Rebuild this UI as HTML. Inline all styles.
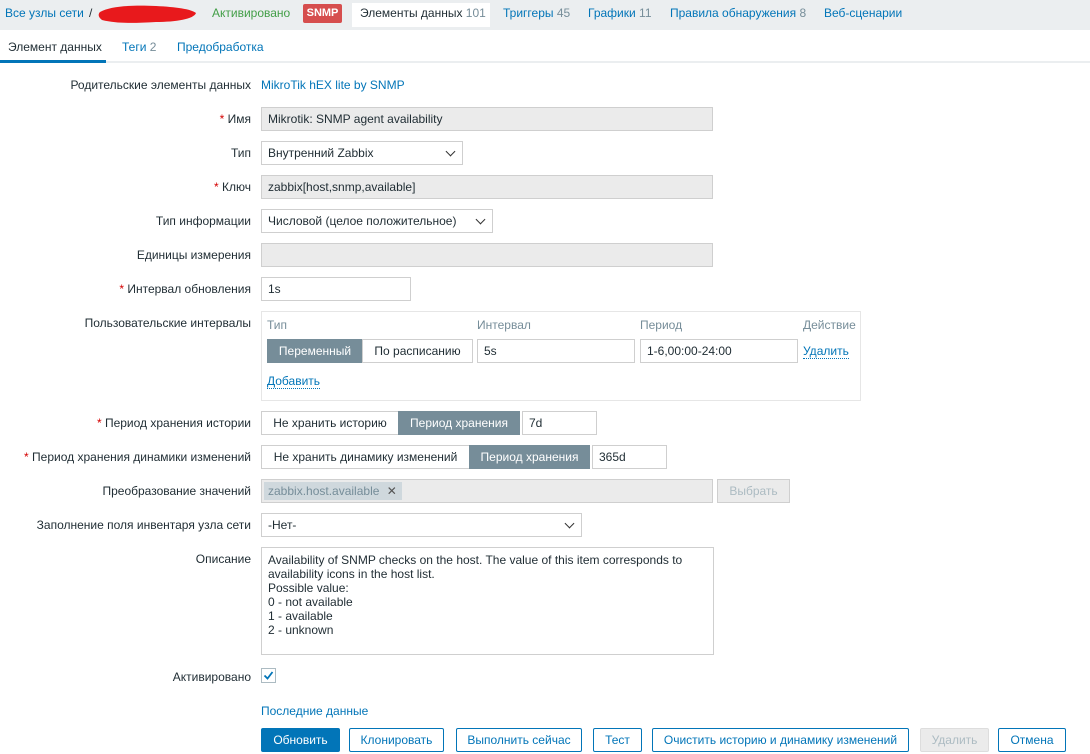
<!DOCTYPE html>
<html><head><meta charset="utf-8"><style>
*{box-sizing:border-box;margin:0;padding:0}
body{width:1090px;height:754px;background:#fff;font:12px "Liberation Sans","DejaVu Sans",sans-serif;color:#1f2c33;position:relative;overflow:hidden}
.a{position:absolute;white-space:nowrap}
.l{position:absolute;right:839px;white-space:nowrap}
.r{color:#d40000}
.in{position:absolute;height:24px;border:1px solid #cfcfcf;background:#fff;padding:0 6px;line-height:22px}
.g{background:#ebebeb}
.sel:after{content:"";position:absolute;right:8px;top:6px;width:6px;height:6px;border-right:1.5px solid #333;border-bottom:1.5px solid #333;transform:rotate(45deg)}
.b{position:absolute;height:24px;line-height:22px;text-align:center;border:1px solid #cfcfcf;background:#fff}
.d{background:#768d99;color:#fff;border-color:#768d99}
.bt{position:absolute;top:728px;height:24px;line-height:22px;text-align:center;border:1px solid #0275b8;color:#0275b8;background:#fff;border-radius:2px}
.lk{color:#0275b8}
.u{border-bottom:1px dotted #0275b8}
</style></head><body>
<div class="a" style="left:0;top:0;width:1090px;height:30px;background:#ebeef0"></div>
<div class="a lk" style="top:6px;left:5px">Все узлы сети</div>
<div class="a" style="left:89px;top:6px">/</div>
<svg class="a" style="left:96px;top:2px" width="104" height="24"><path d="M4 10 C15 4 35 3 60 4 C80 5 95 7 100 11 C98 17 80 20 60 20 C40 21 22 22 6 18 C2 15 2 12 4 10 Z" fill="#e8191c"/></svg>
<div class="a" style="left:212px;top:6px;color:#429e47">Активировано</div>
<div class="a" style="left:303px;top:4px;width:39px;height:19px;background:#d64e4e;color:#fff;font-weight:bold;font-size:11px;text-align:center;line-height:19px;border-radius:2px">SNMP</div>
<div class="a" style="left:352px;top:3px;width:138px;height:24px;background:#fff"></div>
<div class="a" style="left:360px;top:6px">Элементы данных <span style="color:#768d99">101</span></div>
<div class="a lk" style="left:503px;top:6px">Триггеры <span style="color:#768d99">45</span></div>
<div class="a lk" style="left:588px;top:6px">Графики <span style="color:#768d99">11</span></div>
<div class="a lk" style="left:670px;top:6px">Правила обнаружения <span style="color:#768d99">8</span></div>
<div class="a lk" style="left:824px;top:6px">Веб-сценарии</div>
<div class="a" style="left:0;top:61px;width:1090px;height:2px;background:#ebeef0"></div>
<div class="a" style="left:0;top:60px;width:106px;height:3px;background:#0275b8"></div>
<div class="a" style="left:8px;top:40px">Элемент данных</div>
<div class="a lk" style="left:122px;top:40px">Теги <span style="color:#768d99">2</span></div>
<div class="a lk" style="left:177px;top:40px">Предобработка</div>

<div class="l" style="top:78px">Родительские элементы данных</div><div class="a lk" style="left:261px;top:78px">MikroTik hEX lite by SNMP</div>
<div class="l" style="top:112px"><span class="r">*</span> Имя</div><div class="in g" style="left:261px;top:107px;width:452px">Mikrotik: SNMP agent availability</div>
<div class="l" style="top:146px">Тип</div><div class="in sel" style="left:261px;top:141px;width:202px">Внутренний Zabbix</div>
<div class="l" style="top:180px"><span class="r">*</span> Ключ</div><div class="in g" style="left:261px;top:175px;width:452px">zabbix[host,snmp,available]</div>
<div class="l" style="top:214px">Тип информации</div><div class="in sel" style="left:261px;top:209px;width:232px">Числовой (целое положительное)</div>
<div class="l" style="top:248px">Единицы измерения</div><div class="in g" style="left:261px;top:243px;width:452px"></div>
<div class="l" style="top:282px"><span class="r">*</span> Интервал обновления</div><div class="in" style="left:261px;top:277px;width:150px">1s</div>
<div class="l" style="top:316px">Пользовательские интервалы</div>
<div class="a" style="left:261px;top:311px;width:600px;height:90px;border:1px solid #e6e6e6;background:#fff"></div>
<div class="a" style="left:267px;top:318px;color:#768d99">Тип</div>
<div class="a" style="left:477px;top:318px;color:#768d99">Интервал</div>
<div class="a" style="left:640px;top:318px;color:#768d99">Период</div>
<div class="a" style="left:803px;top:318px;color:#768d99">Действие</div>
<div class="b d" style="left:267px;top:339px;width:96px">Переменный</div>
<div class="b" style="left:362px;top:339px;width:111px">По расписанию</div>
<div class="in" style="left:477px;top:339px;width:158px">5s</div>
<div class="in" style="left:640px;top:339px;width:158px">1-6,00:00-24:00</div>
<div class="a lk u" style="left:803px;top:344px">Удалить</div>
<div class="a lk u" style="left:267px;top:374px">Добавить</div>
<div class="l" style="top:416px"><span class="r">*</span> Период хранения истории</div>
<div class="b" style="left:261px;top:411px;width:138px">Не хранить историю</div>
<div class="b d" style="left:398px;top:411px;width:122px">Период хранения</div>
<div class="in" style="left:522px;top:411px;width:75px">7d</div>
<div class="l" style="top:450px"><span class="r">*</span> Период хранения динамики изменений</div>
<div class="b" style="left:261px;top:445px;width:209px">Не хранить динамику изменений</div>
<div class="b d" style="left:469px;top:445px;width:121px">Период хранения</div>
<div class="in" style="left:592px;top:445px;width:75px">365d</div>
<div class="l" style="top:484px">Преобразование значений</div>
<div class="in g" style="left:261px;top:479px;width:452px"></div>
<div class="a" style="left:264px;top:482px;width:138px;height:18px;background:#cfd8dd;color:#768d99;line-height:18px;padding-left:4px">zabbix.host.available <b style="margin-left:4px;color:#555">✕</b></div>
<div class="b" style="left:717px;top:479px;width:73px;background:#ebebeb;color:#acbbc2">Выбрать</div>
<div class="l" style="top:518px">Заполнение поля инвентаря узла сети</div>
<div class="in sel" style="left:261px;top:513px;width:321px">-Нет-</div>
<div class="l" style="top:552px">Описание</div>
<div class="in" style="left:261px;top:547px;width:453px;height:108px;line-height:14px;padding-top:5px;white-space:pre">Availability of SNMP checks on the host. The value of this item corresponds to
availability icons in the host list.
Possible value:
0 - not available
1 - available
2 - unknown</div>
<div class="l" style="top:670px">Активировано</div>
<div class="a" style="left:261px;top:668px;width:15px;height:15px;border:1px solid #acbbc2"></div>
<svg class="a" style="left:263px;top:670px" width="11" height="11"><path d="M1.5 5.5 L4.5 8.5 L9.5 2" stroke="#0275b8" stroke-width="1.8" fill="none"/></svg>
<div class="a lk" style="left:261px;top:704px">Последние данные</div>
<div class="bt" style="left:261px;width:79px;background:#0275b8;color:#fff">Обновить</div>
<div class="bt" style="left:349px;width:95px">Клонировать</div>
<div class="bt" style="left:456px;width:126px">Выполнить сейчас</div>
<div class="bt" style="left:593px;width:49px">Тест</div>
<div class="bt" style="left:652px;width:257px">Очистить историю и динамику изменений</div>
<div class="bt" style="left:920px;width:69px;background:#ebebeb;border-color:#ddd;color:#acbbc2">Удалить</div>
<div class="bt" style="left:998px;width:68px">Отмена</div>
</body></html>
